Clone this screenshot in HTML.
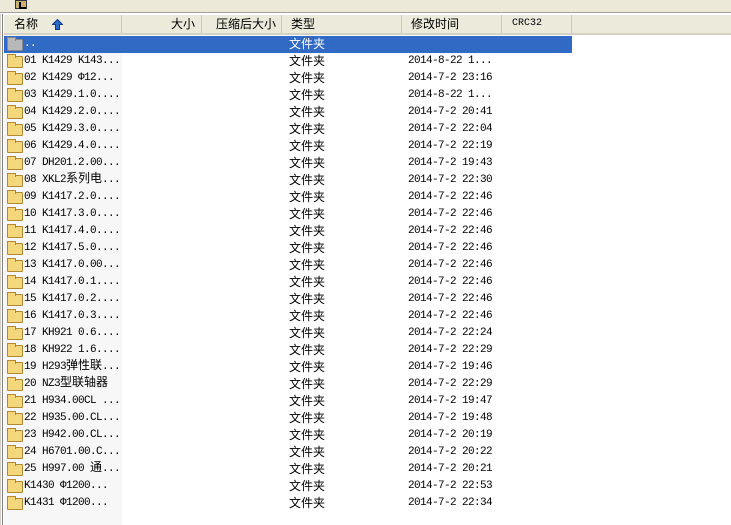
<!DOCTYPE html>
<html><head><meta charset="utf-8"><style>
*{margin:0;padding:0;box-sizing:border-box}
body{width:731px;height:525px;background:#fff;position:relative;overflow:hidden;font-family:"Liberation Mono","Noto Sans CJK SC",monospace;font-size:11px;letter-spacing:-0.6px;color:#000}
.tb{position:absolute;left:0;top:0;width:731px;height:13px;background:#ece9d8;border-bottom:1px solid #a0a0a0}
.ico{position:absolute;left:15px;top:0;width:12px;height:9px;background:#c8b070;border:1px solid #333}
.ico:after{content:"";position:absolute;left:3px;top:1px;width:5px;height:5px;border-left:2px solid #000;border-bottom:2px solid #000}
.lb{position:absolute;left:0;top:14px;width:3px;height:511px;background:#fff;border-right:1px solid #808080;border-left:1px solid #d4d0c8}
.namebg{position:absolute;left:4px;top:34px;width:118px;height:491px;background:#f7f7f7}
.hdr{position:absolute;left:4px;top:15px;width:727px;height:20px;background:#ebeadb;border-bottom:2px solid #d6d2c2;letter-spacing:0}
.hc{position:absolute;top:0;height:18px;line-height:18px;font-family:"Liberation Sans","Noto Sans CJK SC",sans-serif;font-size:12px;border-right:1px solid #cfcbbb}
.hc.c{font-family:"Liberation Mono",monospace;font-size:10px}
.row{position:absolute;left:4px;height:17px;width:568px}
.row span{position:absolute;top:0;height:17px;line-height:17px;white-space:nowrap}
.sel{background:#316ac5;color:#fff}
.f{position:absolute;left:3px;top:3px;width:16px;height:12px;background:#f4d77a;border:1px solid #b08a2e;border-radius:1px}
.f:before{content:"";position:absolute;left:-1px;top:-3px;width:7px;height:3px;background:#f4d77a;border:1px solid #b08a2e;border-bottom:none}
.g .f,.g .f:before{background:#b8b8b8;border-color:#888}
.n{left:20px}
.row span.t{left:285px;font-size:12px;font-family:"Noto Sans CJK SC",sans-serif;letter-spacing:0;line-height:16px}
.d{left:404px}
.row span.k{position:static;font-size:12px;font-family:"Noto Sans CJK SC",sans-serif;letter-spacing:0;line-height:0;height:auto}
</style></head><body>
<div class="tb"><div class="ico"></div></div>
<div class="lb"></div>
<div class="namebg"></div>
<div class="hdr">
<div class="hc" style="left:0;width:118px;padding-left:10px">名称 <svg width="11" height="11" viewBox="0 0 11 11" style="position:absolute;left:48px;top:4px"><path d="M5.5 0.5 L10.5 5.5 L7.5 5.5 L7.5 10.5 L3.5 10.5 L3.5 5.5 L0.5 5.5 Z" fill="#2a6bc8" stroke="#123a80" stroke-width="1"/></svg></div>
<div class="hc" style="left:118px;width:80px;text-align:right;padding-right:6px">大小</div>
<div class="hc" style="left:198px;width:80px;padding-left:14px">压缩后大小</div>
<div class="hc" style="left:278px;width:120px;padding-left:9px">类型</div>
<div class="hc" style="left:398px;width:100px;padding-left:9px">修改时间</div>
<div class="hc c" style="left:498px;width:70px;padding-left:10px">CRC32</div>
</div>

<div class="row sel g" style="top:36px"><div class="f"></div><span class="n">..</span><span class="t">文件夹</span></div>
<div class="row" style="top:53px"><div class="f"></div><span class="n">01 K1429 K143...</span><span class="t">文件夹</span><span class="d">2014-8-22 1...</span></div>
<div class="row" style="top:70px"><div class="f"></div><span class="n">02 K1429 Φ12...</span><span class="t">文件夹</span><span class="d">2014-7-2 23:16</span></div>
<div class="row" style="top:87px"><div class="f"></div><span class="n">03 K1429.1.0....</span><span class="t">文件夹</span><span class="d">2014-8-22 1...</span></div>
<div class="row" style="top:104px"><div class="f"></div><span class="n">04 K1429.2.0....</span><span class="t">文件夹</span><span class="d">2014-7-2 20:41</span></div>
<div class="row" style="top:121px"><div class="f"></div><span class="n">05 K1429.3.0....</span><span class="t">文件夹</span><span class="d">2014-7-2 22:04</span></div>
<div class="row" style="top:138px"><div class="f"></div><span class="n">06 K1429.4.0....</span><span class="t">文件夹</span><span class="d">2014-7-2 22:19</span></div>
<div class="row" style="top:155px"><div class="f"></div><span class="n">07 DH201.2.00...</span><span class="t">文件夹</span><span class="d">2014-7-2 19:43</span></div>
<div class="row" style="top:172px"><div class="f"></div><span class="n">08 XKL2<span class="k">系列电</span>...</span><span class="t">文件夹</span><span class="d">2014-7-2 22:30</span></div>
<div class="row" style="top:189px"><div class="f"></div><span class="n">09 K1417.2.0....</span><span class="t">文件夹</span><span class="d">2014-7-2 22:46</span></div>
<div class="row" style="top:206px"><div class="f"></div><span class="n">10 K1417.3.0....</span><span class="t">文件夹</span><span class="d">2014-7-2 22:46</span></div>
<div class="row" style="top:223px"><div class="f"></div><span class="n">11 K1417.4.0....</span><span class="t">文件夹</span><span class="d">2014-7-2 22:46</span></div>
<div class="row" style="top:240px"><div class="f"></div><span class="n">12 K1417.5.0....</span><span class="t">文件夹</span><span class="d">2014-7-2 22:46</span></div>
<div class="row" style="top:257px"><div class="f"></div><span class="n">13 K1417.0.00...</span><span class="t">文件夹</span><span class="d">2014-7-2 22:46</span></div>
<div class="row" style="top:274px"><div class="f"></div><span class="n">14 K1417.0.1....</span><span class="t">文件夹</span><span class="d">2014-7-2 22:46</span></div>
<div class="row" style="top:291px"><div class="f"></div><span class="n">15 K1417.0.2....</span><span class="t">文件夹</span><span class="d">2014-7-2 22:46</span></div>
<div class="row" style="top:308px"><div class="f"></div><span class="n">16 K1417.0.3....</span><span class="t">文件夹</span><span class="d">2014-7-2 22:46</span></div>
<div class="row" style="top:325px"><div class="f"></div><span class="n">17 KH921 0.6....</span><span class="t">文件夹</span><span class="d">2014-7-2 22:24</span></div>
<div class="row" style="top:342px"><div class="f"></div><span class="n">18 KH922 1.6....</span><span class="t">文件夹</span><span class="d">2014-7-2 22:29</span></div>
<div class="row" style="top:359px"><div class="f"></div><span class="n">19 H293<span class="k">弹性联</span>...</span><span class="t">文件夹</span><span class="d">2014-7-2 19:46</span></div>
<div class="row" style="top:376px"><div class="f"></div><span class="n">20 NZ3<span class="k">型联轴器</span></span><span class="t">文件夹</span><span class="d">2014-7-2 22:29</span></div>
<div class="row" style="top:393px"><div class="f"></div><span class="n">21 H934.00CL ...</span><span class="t">文件夹</span><span class="d">2014-7-2 19:47</span></div>
<div class="row" style="top:410px"><div class="f"></div><span class="n">22 H935.00.CL...</span><span class="t">文件夹</span><span class="d">2014-7-2 19:48</span></div>
<div class="row" style="top:427px"><div class="f"></div><span class="n">23 H942.00.CL...</span><span class="t">文件夹</span><span class="d">2014-7-2 20:19</span></div>
<div class="row" style="top:444px"><div class="f"></div><span class="n">24 H6701.00.C...</span><span class="t">文件夹</span><span class="d">2014-7-2 20:22</span></div>
<div class="row" style="top:461px"><div class="f"></div><span class="n">25 H997.00 <span class="k">通</span>...</span><span class="t">文件夹</span><span class="d">2014-7-2 20:21</span></div>
<div class="row" style="top:478px"><div class="f"></div><span class="n">K1430 Φ1200...</span><span class="t">文件夹</span><span class="d">2014-7-2 22:53</span></div>
<div class="row" style="top:495px"><div class="f"></div><span class="n">K1431 Φ1200...</span><span class="t">文件夹</span><span class="d">2014-7-2 22:34</span></div>
</body></html>
